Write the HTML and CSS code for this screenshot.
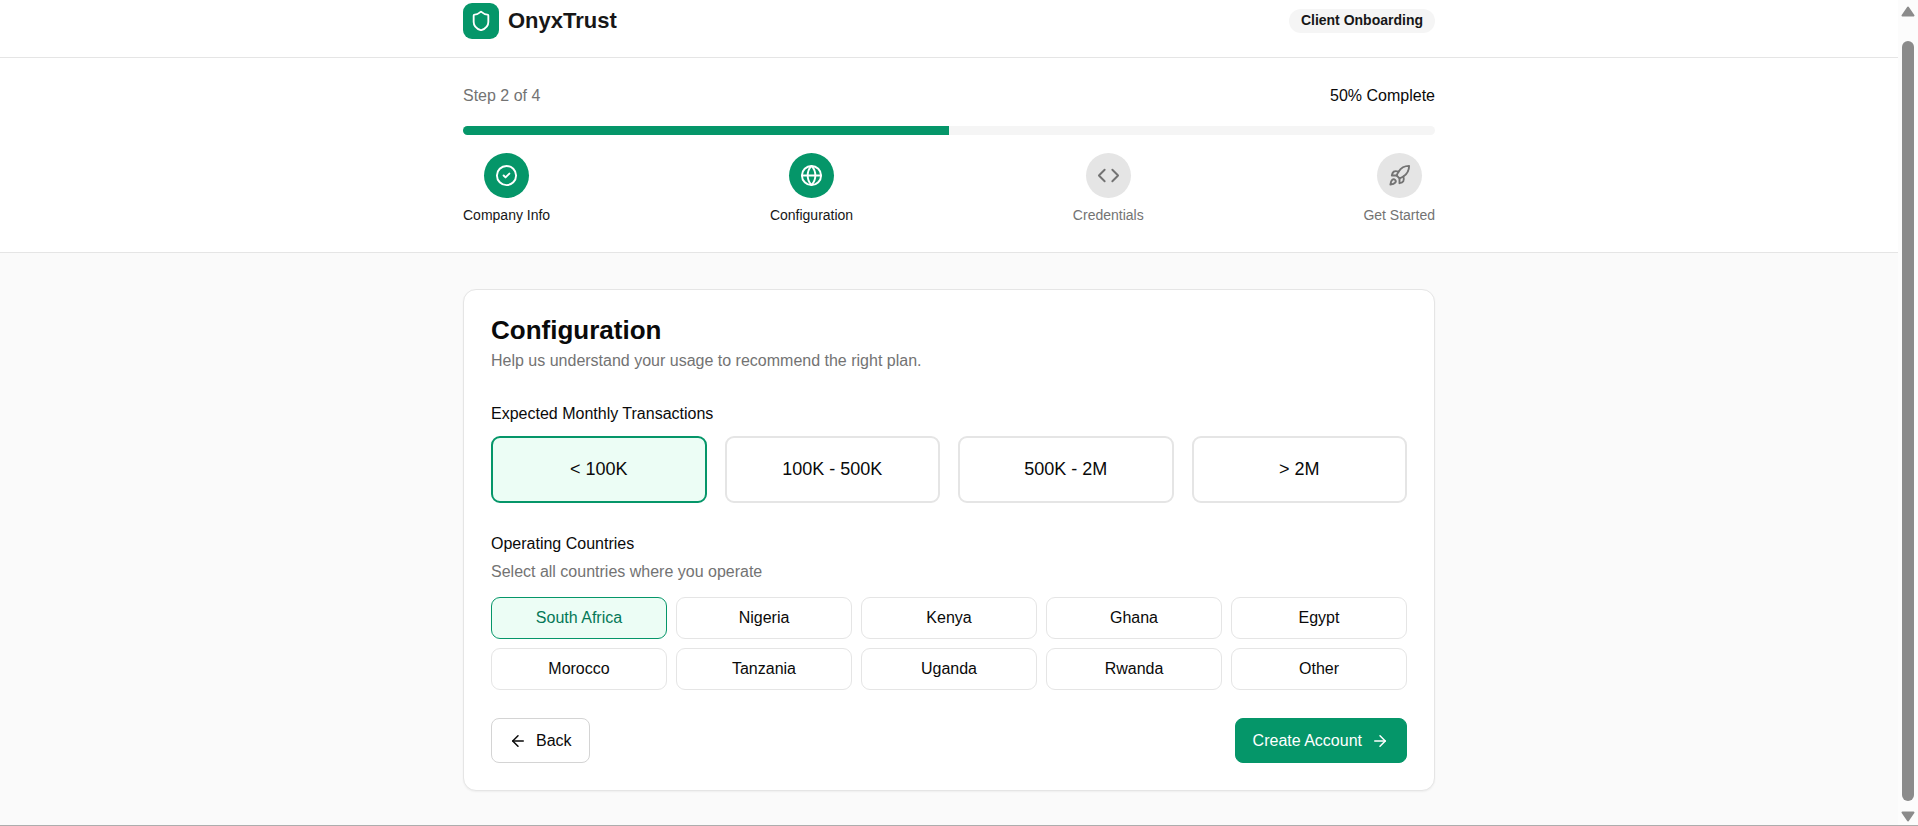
FILE: index.html
```
<!DOCTYPE html>
<html lang="en">
  <head>
    <meta charset="UTF-8" />
    <meta name="viewport" content="width=device-width, initial-scale=1.0" />
    <title>OnyxTrust - Client Onboarding</title>
    <link rel="stylesheet" href="styles.css">
  </head>
  <body>
    <div class="page">
      <header class="header">
        <div class="container header-row">
          <div class="brand">
            <span class="logo">
              <svg class="icon" viewBox="0 0 24 24"><path d="M20 13c0 5-3.5 7.5-7.66 8.95a1 1 0 0 1-.67-.01C7.5 20.5 4 18 4 13V6a1 1 0 0 1 1-1c2 0 4.5-1.2 6.24-2.72a1.17 1.17 0 0 1 1.52 0C14.51 3.81 17 5 19 5a1 1 0 0 1 1 1z"/></svg>
            </span>
            <span class="brand-name">OnyxTrust</span>
          </div>
          <span class="badge">Client Onboarding</span>
        </div>
      </header>

      <section class="progress">
        <div class="container">
          <div class="progress-text">
            <span class="muted">Step 2 of 4</span>
            <span>50% Complete</span>
          </div>
          <div class="bar"><div class="bar-fill" style="width: 50%"></div></div>
          <ol class="steps">
            <li class="step done">
              <span class="circle">
                <svg class="icon" viewBox="0 0 24 24"><circle cx="12" cy="12" r="10"/><path d="m9 12 2 2 4-4"/></svg>
              </span>
              Company Info
            </li>
            <li class="step done">
              <span class="circle">
                <svg class="icon" viewBox="0 0 24 24"><circle cx="12" cy="12" r="10"/><path d="M12 2a14.5 14.5 0 0 0 0 20 14.5 14.5 0 0 0 0-20"/><path d="M2 12h20"/></svg>
              </span>
              Configuration
            </li>
            <li class="step">
              <span class="circle">
                <svg class="icon" viewBox="0 0 24 24"><path d="m16 18 6-6-6-6"/><path d="m8 6-6 6 6 6"/></svg>
              </span>
              Credentials
            </li>
            <li class="step">
              <span class="circle">
                <svg class="icon" viewBox="0 0 24 24"><path d="M4.5 16.5c-1.5 1.26-2 5-2 5s3.74-.5 5-2c.71-.84.7-2.13-.09-2.91a2.18 2.18 0 0 0-2.91-.09z"/><path d="m12 15-3-3a22 22 0 0 1 2-3.95A12.88 12.88 0 0 1 22 2c0 2.72-.78 7.5-6 11a22.35 22.35 0 0 1-4 2z"/><path d="M9 12H4s.55-3.03 2-4c1.62-1.08 5 0 5 0"/><path d="M12 15v5s3.03-.55 4-2c1.08-1.62 0-5 0-5"/></svg>
              </span>
              Get Started
            </li>
          </ol>
        </div>
      </section>

      <main class="main container">
        <div class="card">
          <h1>Configuration</h1>
          <p class="muted subtitle">Help us understand your usage to recommend the right plan.</p>

          <h2 id="volume-label">Expected Monthly Transactions</h2>
          <div class="volumes" role="group" aria-labelledby="volume-label">
            <button type="button" class="volume selected" aria-pressed="true">&lt; 100K</button>
            <button type="button" class="volume" aria-pressed="false">100K - 500K</button>
            <button type="button" class="volume" aria-pressed="false">500K - 2M</button>
            <button type="button" class="volume" aria-pressed="false">&gt; 2M</button>
          </div>

          <h2 id="country-label">Operating Countries</h2>
          <p class="muted hint">Select all countries where you operate</p>
          <div class="countries" role="group" aria-labelledby="country-label">
            <button type="button" class="country selected" aria-pressed="true">South Africa</button>
            <button type="button" class="country" aria-pressed="false">Nigeria</button>
            <button type="button" class="country" aria-pressed="false">Kenya</button>
            <button type="button" class="country" aria-pressed="false">Ghana</button>
            <button type="button" class="country" aria-pressed="false">Egypt</button>
            <button type="button" class="country" aria-pressed="false">Morocco</button>
            <button type="button" class="country" aria-pressed="false">Tanzania</button>
            <button type="button" class="country" aria-pressed="false">Uganda</button>
            <button type="button" class="country" aria-pressed="false">Rwanda</button>
            <button type="button" class="country" aria-pressed="false">Other</button>
          </div>

          <div class="actions">
            <button type="button" class="btn btn-back">
              <svg class="icon" viewBox="0 0 24 24"><path d="m12 19-7-7 7-7"/><path d="M19 12H5"/></svg>
              Back
            </button>
            <button type="button" class="btn btn-next">
              Create Account
              <svg class="icon" viewBox="0 0 24 24"><path d="M5 12h14"/><path d="m12 5 7 7-7 7"/></svg>
            </button>
          </div>
        </div>
      </main>
    </div>

    <div class="scrollbar" aria-hidden="true">
      <svg class="scroll-arrow" viewBox="0 0 14 11"><path d="M7 1.5 12.5 9.5H1.5z"/></svg>
      <div class="thumb"></div>
      <svg class="scroll-arrow" viewBox="0 0 14 11"><path d="M7 9.5 12.5 1.5H1.5z"/></svg>
    </div>
  </body>
</html>
```
FILE: styles.css
```
* {
  box-sizing: border-box;
}
body {
  margin: 0;
  min-height: 100vh;
  display: flex;
  font-family: "Liberation Sans", Arial, sans-serif;
  font-size: 16px;
  line-height: 22px;
  color: #0a0a0a;
  background: #fafafa;
  border-bottom: 1px solid #adadad;
}
h1, h2, p, ol {
  margin: 0;
  padding: 0;
}
button {
  font: inherit;
  color: inherit;
  background: #fff;
  cursor: pointer;
}
.page {
  flex: 1;
}
.container {
  max-width: 1008px;
  margin: 0 auto;
  padding: 0 18px;
}
.muted {
  color: #737373;
}
.icon {
  width: 22px;
  height: 22px;
  fill: none;
  stroke: currentColor;
  stroke-width: 2;
  stroke-linecap: round;
  stroke-linejoin: round;
}

/* header */
.header {
  background: #fff;
  border-bottom: 1px solid #e5e5e5;
  padding: 3px 0 18px;
}
.header-row {
  display: flex;
  justify-content: space-between;
  align-items: center;
}
.brand {
  display: flex;
  align-items: center;
  gap: 9px;
}
.logo {
  width: 36px;
  height: 36px;
  display: flex;
  align-items: center;
  justify-content: center;
  background: #059669;
  color: #fff;
  border-radius: 9px;
}
.brand-name {
  font-size: 22px;
  font-weight: bold;
  color: #171717;
}
.badge {
  padding: 0 12px 2px;
  font-size: 14px;
  font-weight: bold;
  color: #171717;
  background: #f5f5f5;
  border-radius: 12px;
}

/* progress */
.progress {
  background: #fff;
  border-bottom: 1px solid #e5e5e5;
  padding: 27px 0;
}
.progress-text {
  display: flex;
  justify-content: space-between;
  margin-bottom: 19px;
}
.bar {
  height: 9px;
  background: #f5f5f5;
  border-radius: 5px;
  overflow: hidden;
}
.bar-fill {
  height: 100%;
  background: #059669;
}
.steps {
  display: flex;
  justify-content: space-between;
  margin-top: 18px;
  list-style: none;
}
.step {
  display: flex;
  flex-direction: column;
  align-items: center;
  gap: 9px;
  padding-bottom: 2px;
  font-size: 14px;
  line-height: 16px;
  color: #737373;
}
.circle {
  width: 45px;
  height: 45px;
  display: flex;
  align-items: center;
  justify-content: center;
  background: #e5e5e5;
  border-radius: 50%;
}
.circle .icon {
  width: 23px;
  height: 23px;
}
.step.done {
  color: #171717;
}
.step.done .circle {
  background: #059669;
  color: #fff;
}

/* card */
.main {
  padding-top: 36px;
  padding-bottom: 34px;
}
.card {
  padding: 27px;
  background: #fff;
  border: 1px solid #e5e5e5;
  border-radius: 13px;
  box-shadow: 0 1px 2px rgba(0, 0, 0, 0.05);
}
h1 {
  font-size: 26px;
  line-height: 27px;
}
.subtitle {
  margin: 6px 0 28px;
}
h2 {
  font-size: 16px;
  font-weight: normal;
  line-height: 27px;
}
.volumes {
  display: grid;
  grid-template-columns: repeat(4, 1fr);
  gap: 18px;
  margin: 9px 0 27px;
}
.volume {
  padding: 18px;
  font-size: 18px;
  line-height: 27px;
  border: 2px solid #e5e5e5;
  border-radius: 9px;
}
.hint {
  margin: 4px 0 14px;
}
.countries {
  display: grid;
  grid-template-columns: repeat(5, 1fr);
  gap: 9px;
}
.country {
  padding: 9px;
  border: 1px solid #e5e5e5;
  border-radius: 9px;
}
.volume.selected,
.country.selected {
  border-color: #059669;
  background: #ecfdf5;
}
.country.selected {
  color: #047857;
}
.actions {
  display: flex;
  justify-content: space-between;
  margin-top: 28px;
}
.btn {
  display: flex;
  align-items: center;
  gap: 9px;
  padding: 10px 17px;
  line-height: 23px;
  border: 1px solid #d4d4d4;
  border-radius: 8px;
}
.btn .icon {
  width: 18px;
  height: 18px;
}
.btn-next {
  background: #059669;
  border-color: #059669;
  color: #fff;
}

/* scrollbar */
.scrollbar {
  width: 20px;
  display: flex;
  flex-direction: column;
  align-items: center;
  padding: 6px 0 3px;
  background: #fcfcfc;
}
.scroll-arrow {
  width: 14px;
  height: 11px;
  fill: #8b8b8b;
  stroke: #8b8b8b;
  stroke-width: 2;
  stroke-linejoin: round;
}
.thumb {
  flex: 1;
  width: 12px;
  margin: 24px 0 10px;
  background: #8b8b8b;
  border-radius: 6px;
}
```
